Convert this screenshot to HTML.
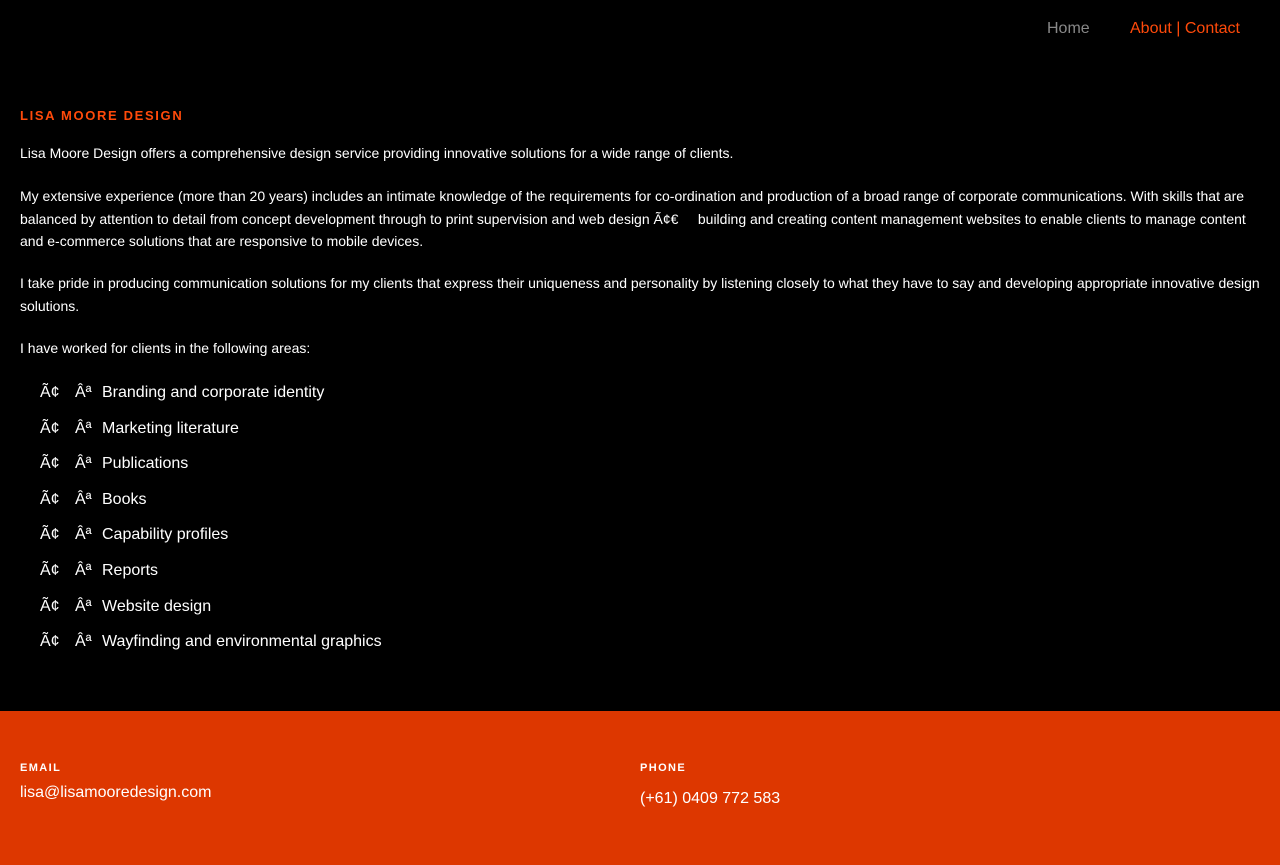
<!DOCTYPE html>
<html><head><meta charset="utf-8"><style>
body{margin:0;background:#000;font-family:"Liberation Sans",Arial,sans-serif;color:#fff;width:1280px;height:865px;overflow:hidden;position:relative}
.nav{position:absolute;top:19px;font-size:16px;line-height:20px}
h1{position:absolute;left:20px;top:108px;margin:0;font-size:13px;letter-spacing:1.65px;color:#ff4a0a;font-weight:bold;line-height:16px}
.p{position:absolute;left:20px;width:1245px;font-size:14px;letter-spacing:0;line-height:22.5px;margin:0}
ul{position:absolute;left:40px;top:379px;margin:0;padding:0;list-style:none;font-size:16px}
li{height:35.6px;line-height:28px}
li span.a{display:inline-block;width:35px}
li span.b{display:inline-block;width:27px}
.foot{position:absolute;left:0;top:711px;width:1280px;height:154px;background:#dd3700}
.lab{position:absolute;top:51px;font-size:11px;font-weight:bold;letter-spacing:1.4px}
.val{position:absolute;font-size:16px}
</style></head><body>
<div class="nav" style="left:1047px;color:#888">Home</div>
<div class="nav" style="left:1130px;color:#ff4a0a">About | Contact</div>
<h1>LISA MOORE DESIGN</h1>
<p class="p" style="top:142px">Lisa Moore Design offers a comprehensive design service providing innovative solutions for a wide range of clients.</p>
<p class="p" style="top:185px">My extensive experience (more than 20 years) includes an intimate knowledge of the requirements for co-ordination and production of a broad range of corporate communications. With skills that are balanced by attention to detail from concept development through to print supervision and web design Ã¢€&nbsp;&nbsp;&nbsp;&nbsp; building and creating content management websites to enable clients to manage content and e-commerce solutions that are responsive to mobile devices.</p>
<p class="p" style="top:272px">I take pride in producing communication solutions for my clients that express their uniqueness and personality by listening closely to what they have to say and developing appropriate innovative design solutions.</p>
<p class="p" style="top:337px">I have worked for clients in the following areas:</p>
<ul>
<li><span class="a">Ã¢</span><span class="b">Âª</span>Branding and corporate identity</li>
<li><span class="a">Ã¢</span><span class="b">Âª</span>Marketing literature</li>
<li><span class="a">Ã¢</span><span class="b">Âª</span>Publications</li>
<li><span class="a">Ã¢</span><span class="b">Âª</span>Books</li>
<li><span class="a">Ã¢</span><span class="b">Âª</span>Capability profiles</li>
<li><span class="a">Ã¢</span><span class="b">Âª</span>Reports</li>
<li><span class="a">Ã¢</span><span class="b">Âª</span>Website design</li>
<li><span class="a">Ã¢</span><span class="b">Âª</span>Wayfinding and environmental graphics</li>
</ul>
<div class="foot">
<div class="lab" style="left:20px">EMAIL</div>
<div class="val" style="left:20px;top:73px">lisa@lisamooredesign.com</div>
<div class="lab" style="left:640px">PHONE</div>
<div class="val" style="left:640px;top:79px">(+61) 0409 772 583</div>
</div>
</body></html>
